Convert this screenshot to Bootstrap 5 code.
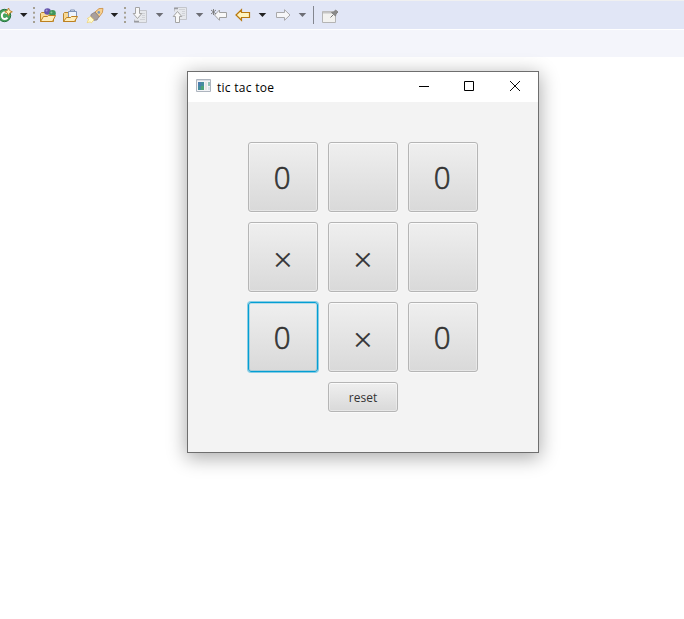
<!DOCTYPE html>
<html lang="en">
<head>
<meta charset="utf-8">
<title>tic tac toe</title>
<link href="https://cdn.jsdelivr.net/npm/bootstrap@5.3.0/dist/css/bootstrap.min.css" rel="stylesheet">
<style>
body{background:#fff;font-family:"Noto Sans","Open Sans",sans-serif;height:619px;overflow:hidden}
.ide-tools{height:29px;background:#e1e6f6;border-top:1px solid #f0f0f0}
.ide-tools svg{height:28px;flex:none;display:block}
.ide-strip{height:28px;background:#f4f5fb;border-top:1px solid #fff}
.game-window{width:352px;height:382px;margin:14px 0 0 187px;border:1px solid #6e6e6e;background:#f3f3f3;box-shadow:0 4px 18px 1px rgba(0,0,0,.33)}
.title-strip{height:30px;background:#fff;color:#000;padding-left:8px}
.title-text{font-family:"Open Sans","Noto Sans",sans-serif;font-size:12px;line-height:32px;height:30px;margin-left:6px;letter-spacing:.27px}
.board{grid-template-columns:repeat(3,70px);grid-template-rows:repeat(3,70px) 30px;gap:10px;padding:40px 0 0 60px}
.tile{color:#333;border:1px solid #b5b5b5;border-radius:3px;background:linear-gradient(#efefef,#d9d9d9);box-shadow:inset 0 0 0 1px rgba(255,255,255,.35),inset 0 1px 0 rgba(255,255,255,.6),0 1px 0 #fafafa;padding:0;font-size:32px;line-height:70px;font-family:"Open Sans","Noto Sans",sans-serif}
.tile:hover{color:#333;border-color:#b5b5b5}
.tile.focused{border-color:#039ed3;box-shadow:0 0 0 1px rgba(3,158,211,.45),inset 0 0 0 1px rgba(3,158,211,.25)}
.zero{font-weight:300;padding-right:1px;transform:scaleX(.92);-webkit-text-stroke:.7px #333}
.cross{font-weight:300;padding-top:4px;-webkit-text-stroke:.5px #333}
.reset-tile{grid-column:2;font-size:12px;line-height:28px;padding-top:1px}
</style>
</head>
<body>
<header class="ide-tools d-flex">
<svg width="16" viewBox="0 1 16 28"><circle cx="4.5" cy="15.5" r="6.2" fill="#47a35d" stroke="#24713d"/><path d="M7.3 13.5Q4.5 11 2.5 13.5Q1 16 3 18.5Q5 20 7.5 17.7" fill="none" stroke="#fff" stroke-width="1.9"/><path d="M8.5 8l1.2 2.6 2.6 1.2-2.6 1.2-1.2 2.6-1.2-2.6-2.6-1.2 2.6-1.2z" fill="#fff2b4" stroke="#b87b23" stroke-width=".9"/></svg>
<svg width="16" viewBox="16 1 16 28"><path d="M20 13h7.5l-3.75 4z" fill="#202020"/></svg>
<svg width="6" viewBox="32 1 6 28"><path d="M34 7v17" stroke="#a5a092" stroke-width="2" stroke-dasharray="2 2.7"/></svg>
<svg width="22" viewBox="38 1 22 28"><path d="M40.5 21.5v-8l1-1h4l1 1h7v8z" fill="#f9d995" stroke="#b8862e"/><circle cx="47.5" cy="11.5" r="3.3" fill="#6555ad"/><circle cx="52.5" cy="13.3" r="3.3" fill="#3f965b"/><circle cx="46.6" cy="10.6" r="1" fill="#9c91d2"/><circle cx="51.4" cy="12.4" r="1" fill="#86c795"/><path d="M40.5 21.5l3-5h4l1-1h7l-3 6z" fill="#ffedba" stroke="#bd8020"/></svg>
<svg width="23" viewBox="60 1 23 28"><path d="M63.5 21.5v-8l1-1h4v2h7v7z" fill="#f9d995" stroke="#b8862e"/><path d="M68.5 11.5h8v6h-8z" fill="#eef4fc" stroke="#8095b7"/><path d="M70.5 11v-1h4v1" fill="none" stroke="#8095b7"/><path d="M63.5 21.5l3-4h4l1-1h6l-3 5z" fill="#ffedba" stroke="#bd8020"/></svg>
<svg width="23" viewBox="83 1 23 28"><path d="M95 12l4-3.4 4-.2-.6 4.2-3.5 4.6z" fill="#f8d08d" stroke="#c98a3e" stroke-width=".8"/><circle cx="98.8" cy="12.4" r="1.3" fill="#7898bb"/><path d="M91 14.5l4-2.5 4 4.5-2 3.5-3.6.4-2.8-3z" fill="#a99f9b" stroke="#83787a" stroke-width=".7"/><path d="M90.5 16.5l-3.2 2 1.4.7-1.6 3.5 3-.8 1.2 1 2.7-3z" fill="#fffbd0" stroke="#efcf65" stroke-width=".7"/></svg>
<svg width="16" viewBox="106 1 16 28"><path d="M110.7 13h7.5l-3.75 4z" fill="#202020"/></svg>
<svg width="8" viewBox="122 1 8 28"><path d="M125 7v17" stroke="#a5a092" stroke-width="2" stroke-dasharray="2 2.7"/></svg>
<svg width="22" viewBox="130 1 22 28"><path d="M138.5 10.5h8v12h-12v-3" fill="#e6e8ec" stroke="#c3c5cb"/><path d="M142 13.5h3m-3 2h3m-3 2h3m-5 2h5" stroke="#d0d2d7"/><path d="M134 21.5h5" stroke="#999ba0" stroke-width="1.5"/><path d="M135.5 7.5h4v6h2.3l-4.3 5-4.3-5h2.3z" fill="#f8f8f8" stroke="#a4a4a4"/></svg>
<svg width="17" viewBox="152 1 17 28"><path d="M155.8 13h7.5l-3.75 4z" fill="#6d6e75"/></svg>
<svg width="22" viewBox="169 1 22 28"><path d="M174.5 11.5v-4h12v12h-7" fill="#e6e8ec" stroke="#c3c5cb"/><path d="M179 9.5h6m-3 2h3m-3 2h3m-3 2h3" stroke="#d0d2d7"/><path d="M174 8.5h4" stroke="#999ba0" stroke-width="1.5"/><path d="M175.5 22.5h4v-6h2.3l-4.3-5-4.3 5h2.3z" fill="#f8f8f8" stroke="#a4a4a4"/></svg>
<svg width="16" viewBox="191 1 16 28"><path d="M195.8 13h7.5l-3.75 4z" fill="#6d6e75"/></svg>
<svg width="24" viewBox="207 1 24 28"><path d="M214.5 15l5-5v2.5h7v5h-7v2.8z" fill="#f8f8f8" stroke="#a0a0a0"/><path d="M213.5 9v6m-2.5-5l5 4m0-4l-5 4" stroke="#777" stroke-width=".9"/></svg>
<svg width="24" viewBox="231 1 24 28"><path d="M236 15l5.5-5.3v2.8h8v5h-8v2.8z" fill="#fff3bd" stroke="#b8780f" stroke-width="1.2"/></svg>
<svg width="16" viewBox="255 1 16 28"><path d="M258.7 13h7.5l-3.75 4z" fill="#202020"/></svg>
<svg width="24" viewBox="271 1 24 28"><path d="M290 15l-5.5-5.3v2.8h-8v5h8v2.8z" fill="#f6f6f8" stroke="#a8a8aa"/></svg>
<svg width="14" viewBox="295 1 14 28"><path d="M298.7 13h7.5l-3.75 4z" fill="#6d6e75"/></svg>
<svg width="9" viewBox="309 1 9 28"><path d="M313.5 6v18" stroke="#83868f"/></svg>
<svg width="24" viewBox="318 1 24 28"><path d="M322.5 11.5h13v11h-13z" fill="#f2f2f0" stroke="#b4b4b4"/><path d="M323 12.5h11" stroke="#c5c5c5" stroke-width="2"/><path d="M330.5 17.500l3-3" stroke="#777"/><path d="M331.5 12.5l2.500-.5 1.500-2 2.500 2-2 2-.5 2z" fill="#8a8a8a" stroke="#858585"/></svg>
</header>
<div class="ide-strip"></div>
<main class="game-window">
<div class="title-strip d-flex">
<svg width="15" height="30" viewBox="196 72 15 30"><path d="M196.5 79.5h14v12h-14z" fill="#f3f4f7" stroke="#aeb5bf"/><path d="M197 80.5h13" stroke="#d9dde4"/><path d="M198 82h6v8h-6z" fill="#438d9e"/><path d="M198 82h3v4h-3z" fill="#4b7fad"/><path d="M201 86h3v4h-3z" fill="#4ba177"/><path d="M205 82h2v8h-2z" fill="#e5e5e5"/><path d="M208 82h2v4h-2z" fill="#94c4ba"/><path d="M208 87h2v3h-2z" fill="#dce2e9"/></svg>
<span class="title-text">tic tac toe</span>
<svg class="ms-auto" width="138" height="30" viewBox="400 72 138 30" fill="none" stroke="#000"><path d="M419 86.5h10M464.5 81.5h9v9h-9z"/><path d="M510 81l10 10m0-10l-10 10" stroke-width=".95"/></svg>
</div>
<div class="board d-grid">
<button class="btn tile d-flex align-items-center justify-content-center"><span class="zero">0</span></button>
<button class="btn tile" aria-label="empty"></button>
<button class="btn tile d-flex align-items-center justify-content-center"><span class="zero">0</span></button>
<button class="btn tile d-flex align-items-center justify-content-center"><span class="cross">×</span></button>
<button class="btn tile d-flex align-items-center justify-content-center"><span class="cross">×</span></button>
<button class="btn tile" aria-label="empty"></button>
<button class="btn tile focused d-flex align-items-center justify-content-center"><span class="zero">0</span></button>
<button class="btn tile d-flex align-items-center justify-content-center"><span class="cross">×</span></button>
<button class="btn tile d-flex align-items-center justify-content-center"><span class="zero">0</span></button>
<button class="btn tile reset-tile">reset</button>
</div>
</main>
<script src="https://cdn.jsdelivr.net/npm/bootstrap@5.3.0/dist/js/bootstrap.bundle.min.js"></script>
</body>
</html>
